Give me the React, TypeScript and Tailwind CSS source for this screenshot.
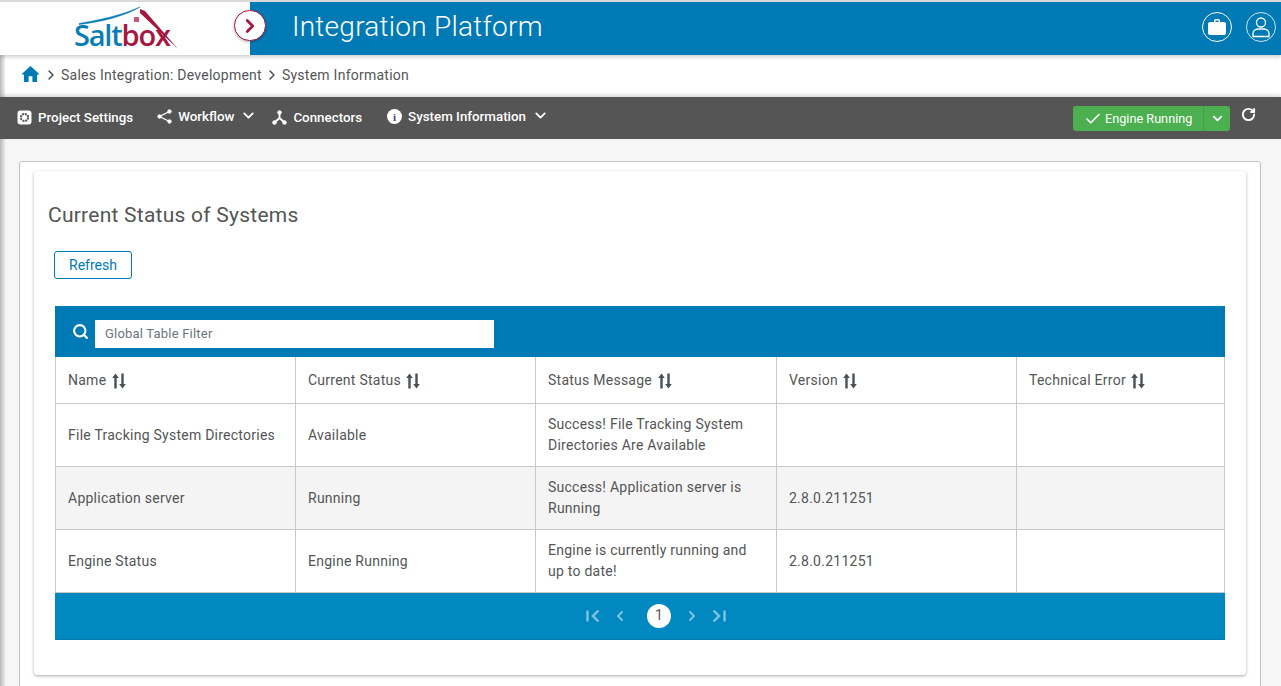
import React from "react";
import { ChevronRight, ChevronDown, ChevronLeft, Check, RotateCw, Search } from "lucide-react";

const rows = [
  { name: "File Tracking System Directories", status: "Available", msg: ["Success! File Tracking System", "Directories Are Available"], ver: "" },
  { name: "Application server", status: "Running", msg: ["Success! Application server is", "Running"], ver: "2.8.0.211251" },
  { name: "Engine Status", status: "Engine Running", msg: ["Engine is currently running and", "up to date!"], ver: "2.8.0.211251" },
];

function SortIcon() {
  return (
    <svg width="14" height="16" viewBox="0 0 14 16" className="text-[#495057]" fill="currentColor">
      <path d="M3.500 0.500 L6.800 5 H4.700 V15.500 H2.300 V5 H0.200 Z" />
      <path d="M10.500 15.500 L13.800 11 H11.700 V0.500 H9.300 V11 H7.200 Z" />
    </svg>
  );
}

function Logo() {
  return (
    <div className="relative w-[110px] h-[52px] ml-[72px]">
      <svg width="110" height="52" viewBox="0 0 110 52" className="absolute left-0 top-0">
        <path d="M7 21.500 C28 18 50 13 68 5 C53 14 30 20 7 22.500 Z" fill="#0b7db5" stroke="#0b7db5" strokeWidth="0.500" />
        <path d="M68 7 L73 9 L106 47 L68 11 Z" fill="#a6173f" />
        <rect x="62" y="15" width="5" height="5" fill="#c25a78" />
      </svg>
      <span className="absolute left-[2px] top-[18px] text-[29px] leading-[30px] font-semibold tracking-[-1.2px] font-['Open_Sans',sans-serif] whitespace-nowrap">
        <span className="text-[#0b7db5]">Salt</span>
        <span className="text-[#a6173f]">box</span>
      </span>
    </div>
  );
}

function NavItem({ icon, label, chevron, className }: { icon: React.ReactNode; label: string; chevron?: boolean; className?: string }) {
  return (
    <div className={"flex items-center text-white text-[13.35px] font-medium " + (className ?? "")}>
      {icon}
      <span className="whitespace-nowrap">{label}</span>
      {chevron && <ChevronDown size={17} strokeWidth={2.5} className="ml-[6px] -mt-[3px]" />}
    </div>
  );
}

export default function App() {
  return (
    <div className="relative w-[1281px] h-[686px] overflow-hidden bg-[#f6f6f6] font-['Roboto',sans-serif] text-[#495057]">
      <div className="h-[2px] bg-[#dddddd]" />
      <header className="relative z-10 flex h-[53px] shadow-[0_2px_4px_rgba(0,0,0,0.2)]">
        <div className="w-[250px] bg-white shrink-0"><Logo /></div>
        <div className="flex-1 bg-[#007ab5] flex items-center pl-[42px] pr-[5px]">
          <h1 className="text-white text-[28px] font-light tracking-[0.25px] -mt-[3px]">Integration Platform</h1>
          <div className="ml-auto flex items-center gap-[14px] -mt-[3px]">
            <div className="w-[30px] h-[30px] rounded-full border border-white flex items-center justify-center">
              <svg width="18" height="16" viewBox="0 0 18 16" fill="white">
                <path d="M6 3V1.500A1.500 1.500 0 0 1 7.500 0h3A1.500 1.500 0 0 1 12 1.500V3h4a2 2 0 0 1 2 2v9a2 2 0 0 1-2 2H2a2 2 0 0 1-2-2V5a2 2 0 0 1 2-2zm1.500 0h3V1.500h-3z" fillRule="evenodd" />
              </svg>
            </div>
            <div className="w-[30px] h-[30px] rounded-full border border-white/80 flex items-center justify-center">
              <svg width="20" height="22" viewBox="0 0 20 22" fill="none" stroke="white" strokeWidth="1.300">
                <circle cx="10" cy="6.500" r="4.500" />
                <path d="M2 20.500 V17.500 C2 14.500 5 13 7.500 13 H12.500 C15 13 18 14.500 18 17.500 V20.500 Z" />
              </svg>
            </div>
          </div>
        </div>
        <div className="absolute left-[234px] top-[8px] w-[32px] h-[31px] rounded-full bg-white border-[1.5px] border-[#a6173f] flex items-center justify-center shadow-[0_1px_3px_rgba(0,0,0,0.3)]">
          <ChevronRight size={22} strokeWidth={3} className="text-[#a6173f]" />
        </div>
      </header>

      <nav className="h-[42px] bg-white flex items-center pl-[22px] pb-[2px] text-[14px] tracking-[0.25px] text-[#555555]">
        <svg width="17" height="16" viewBox="3 3 18 17" fill="#007ab5" className="-mt-[3px]">
          <path d="M10 20v-6h4v6h5v-8h3L12 3 2 12h3v8z" />
        </svg>
        <ChevronRight size={16} strokeWidth={2} className="ml-[4px] mr-[2px] text-[#444]" />
        <span>Sales Integration: Development</span>
        <ChevronRight size={16} strokeWidth={2} className="mx-[2px] text-[#444]" />
        <span>System Information</span>
      </nav>

      <div className="relative z-10 h-[42px] bg-[#555555] flex items-center pl-[17px] shadow-[0_-2px_4px_rgba(0,0,0,0.15)]">
        <NavItem
          icon={
            <svg width="15" height="15" viewBox="0 0 15 15" className="mr-[6px]">
              <rect x="0.500" y="0.500" width="14" height="14" rx="3" fill="white" />
              <circle cx="7.500" cy="7.500" r="3.600" fill="none" stroke="#555555" strokeWidth="2" strokeDasharray="2 0.800" />
            </svg>
          }
          label="Project Settings"
        />
        <NavItem
          className="ml-[24px] -mt-[2px]"
          icon={
            <svg width="15" height="15" viewBox="0 0 15 15" fill="white" stroke="white" className="mr-[6px]">
              <circle cx="12.500" cy="2.500" r="1.700" />
              <circle cx="2.500" cy="7.500" r="1.700" />
              <circle cx="12.500" cy="12.500" r="1.700" />
              <path d="M12.500 2.500L2.500 7.500L12.500 12.500" fill="none" strokeWidth="1.300" />
            </svg>
          }
          label="Workflow"
          chevron
        />
        <NavItem
          className="ml-[15px]"
          icon={
            <svg width="15" height="15" viewBox="0 0 15 15" fill="white" stroke="white" className="mr-[6px]">
              <circle cx="7.500" cy="2.500" r="1.800" />
              <circle cx="2.500" cy="12.500" r="1.800" />
              <circle cx="12.500" cy="12.500" r="1.800" />
              <path d="M7.500 3V8L2.500 12.500M7.500 8L12.500 12.500" fill="none" strokeWidth="1.800" />
            </svg>
          }
          label="Connectors"
        />
        <NavItem
          className="ml-[25px] -mt-[2px]"
          icon={
            <div className="w-[15px] h-[15px] rounded-full bg-white text-[#3b3b9a] text-[11px] font-bold flex items-center justify-center mr-[6px] font-['Liberation_Serif',serif]">i</div>
          }
          label="System Information"
          chevron
        />
        <div className="ml-auto flex items-center pr-[25px]">
          <div className="flex h-[25px] w-[157px] rounded-[3px] bg-[#4caf50] text-white text-[12.7px] mt-[1px]">
            <div className="flex-1 flex items-center pl-[11px] border-r border-[#449d48]">
              <Check size={18} strokeWidth={2.200} className="mr-[3px]" />
              <span className="whitespace-nowrap">Engine Running</span>
            </div>
            <div className="w-[26px] flex items-center justify-center">
              <ChevronDown size={15} strokeWidth={3} />
            </div>
          </div>
          <RotateCw size={15} strokeWidth={3} className="ml-[11px] -mt-[7px] text-white" />
        </div>
      </div>

      <main className="absolute left-0 top-[139px] right-0 bottom-0 pl-[19px] pr-[20px] pt-[22px]">
        <div className="absolute left-0 top-[-84px] bottom-0 w-[6px] bg-gradient-to-r from-[#b8b8b8] to-transparent" />
        <div className="h-[600px] rounded-[3px] border border-[#c4c4c4] bg-white pl-[14px] pr-[14px] pt-[9px]">
          <div className="h-[504px] rounded-[3px] bg-white shadow-[0_1px_3px_rgba(0,0,0,0.35)] pl-[14px] pr-[21px]">
            <h2 className="pt-[31px] text-[21px] leading-[26px] tracking-[0.25px] text-[#555555]">Current Status of Systems</h2>
            <button className="block mt-[23px] ml-[6px] w-[78px] h-[28px] rounded-[3px] border border-[#007ab5] text-[#007ab5] text-[14px] bg-white">Refresh</button>
            <div className="mt-[27px] ml-[7px] w-[1170px]">
              <div className="h-[51px] bg-[#007ab5] flex items-center pl-[17px] pt-[4px]">
                <Search size={17} strokeWidth={3} className="text-white -mt-[5px]" />
                <div className="ml-[6px] w-[399px] h-[28px] bg-white text-[13px] tracking-[0.2px] text-[#6c757d] flex items-center pl-[10px]">Global Table Filter</div>
              </div>
              <table className="w-full table-fixed border-collapse text-[14px] tracking-[0.25px] text-[#555555]">
                <colgroup>
                  <col className="w-[240px]" />
                  <col className="w-[240px]" />
                  <col className="w-[241px]" />
                  <col className="w-[240px]" />
                  <col />
                </colgroup>
                <thead>
                  <tr className="h-[46px]">
                    {["Name", "Current Status", "Status Message", "Version", "Technical Error"].map((h) => (
                      <th key={h} className="border border-[#c8c8c8] border-t-0 pl-[12px] pt-[2px] font-normal text-left">
                        <span className="inline-flex items-center gap-[5.5px]">{h}<SortIcon /></span>
                      </th>
                    ))}
                  </tr>
                </thead>
                <tbody>
                  {rows.map((r, i) => (
                    <tr key={r.name} className={"h-[63px] " + (i === 1 ? "bg-[#f4f4f4]" : "bg-white")}>
                      <td className="border border-[#c8c8c8] pl-[12px] pt-[2px]">{r.name}</td>
                      <td className="border border-[#c8c8c8] pl-[12px] pt-[2px]">{r.status}</td>
                      <td className="border border-[#c8c8c8] pl-[12px] leading-[21px]">{r.msg[0]}<br />{r.msg[1]}</td>
                      <td className="border border-[#c8c8c8] pl-[12px] pt-[2px]">{r.ver}</td>
                      <td className="border border-[#c8c8c8] pl-[12px]"></td>
                    </tr>
                  ))}
                </tbody>
              </table>
              <div className="h-[47px] bg-[#0088c0] border-b border-[#0079ab] flex items-center justify-center text-white/50 pl-[32px]">
                <svg width="14" height="14" viewBox="0 0 14 14" fill="none" stroke="currentColor" strokeWidth="2.400">
                  <path d="M1.500 1.500V12.500M12.500 1.500L7 7L12.500 12.500" />
                </svg>
                <ChevronLeft size={16} strokeWidth={3} className="ml-[12px]" />
                <div className="ml-[19px] mr-[13px] w-[24px] h-[24px] rounded-full bg-white text-[#555555] text-[14px] flex items-center justify-center">1</div>
                <ChevronRight size={16} strokeWidth={3} />
                <svg width="14" height="14" viewBox="0 0 14 14" fill="none" stroke="currentColor" strokeWidth="2.400" className="ml-[12px]">
                  <path d="M12.500 1.500V12.500M1.500 1.500L7 7L1.500 12.500" />
                </svg>
              </div>
            </div>
          </div>
        </div>
      </main>
    </div>
  );
}
